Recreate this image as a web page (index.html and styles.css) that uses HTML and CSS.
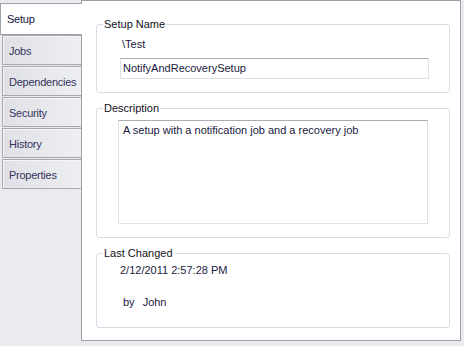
FILE: index.html
```html
<!DOCTYPE html>
<html>
<head>
<meta charset="utf-8">
<link rel="stylesheet" href="styles.css">
</head>
<body>
<div class="window">
  <nav class="tabs">
    <div class="tab active">Setup</div>
    <div class="tab">Jobs</div>
    <div class="tab">Dependencies</div>
    <div class="tab">Security</div>
    <div class="tab">History</div>
    <div class="tab">Properties</div>
  </nav>
  <main class="panel">
    <fieldset class="group">
      <legend>Setup Name</legend>
      <div class="content content-name">
        <div class="path">\Test</div>
        <div class="input">NotifyAndRecoverySetup</div>
      </div>
    </fieldset>
    <fieldset class="group">
      <legend>Description</legend>
      <div class="content content-desc">
        <div class="textarea">A setup with a notification job and a recovery job</div>
      </div>
    </fieldset>
    <fieldset class="group">
      <legend>Last Changed</legend>
      <div class="content content-changed">
        <div class="date">2/12/2011 2:57:28 PM</div>
        <div class="by"><span>by</span><span>John</span></div>
      </div>
    </fieldset>
  </main>
</div>
</body>
</html>
```
FILE: styles.css
```css
html, body {
  margin: 0;
  padding: 0;
}
body {
  background: #e9ebef;
  font: 11px/13px "Liberation Sans", Arial, sans-serif;
  color: #1a1a40;
}
.window {
  display: flex;
  width: 464px;
  height: 346px;
}
.tabs {
  flex: none;
  width: 81px;
  padding-top: 3px;
  display: flex;
  flex-direction: column;
}
.tab {
  box-sizing: border-box;
  width: 79px;
  height: 30px;
  margin-left: 2px;
  margin-bottom: 1px;
  padding: 2px 0 0 6px;
  display: flex;
  align-items: center;
  border: 1px solid #a7a8af;
  border-right: none;
  background: linear-gradient(to right, #e0e1e6, #eeeff2);
  box-shadow: inset 1px 1px 0 #f6f6f8;
  color: #34345e;
  letter-spacing: -0.25px;
}
.tab.active {
  position: relative;
  z-index: 1;
  width: 82px;
  height: 32px;
  margin: 0 -1px 0 0;
  padding-top: 1px;
  background: #fff;
  box-shadow: none;
  border-color: #a0a1a8;
  color: #141440;
}
.panel {
  flex: none;
  box-sizing: border-box;
  width: 380px;
  height: 341px;
  border: 1px solid #9e9fa7;
  background: #fff;
  padding: 17px 10px 0 14px;
}
.group {
  margin: 0;
  padding: 0;
  min-width: 0;
  border: 1px solid #d6dde6;
  border-radius: 3px;
}
.group legend {
  margin-left: 6px;
  padding: 0 1px;
  line-height: 13px;
  color: #111122;
}
.group + .group {
  margin-top: 9px;
}
.content-name {
  padding: 0 20px 13px 23px;
}
.path {
  margin: 7px 0 0 2px;
}
.input {
  box-sizing: border-box;
  margin-top: 7px;
  height: 21px;
  line-height: 19px;
  padding: 0 2px;
  border: 1px solid #dde2e8;
  border-top-color: #abadb3;
  white-space: nowrap;
}
.content-desc {
  padding: 0 21px 13px 21px;
}
.textarea {
  box-sizing: border-box;
  margin-top: 5px;
  height: 104px;
  padding: 3px 4px;
  border: 1px solid #dde2e8;
  border-top-color: #abadb3;
}
.content-changed {
  padding: 0 20px 18px 23px;
}
.date {
  margin-top: 4px;
}
.by {
  margin: 19px 0 0 3px;
  display: flex;
  gap: 8px;
}
```
